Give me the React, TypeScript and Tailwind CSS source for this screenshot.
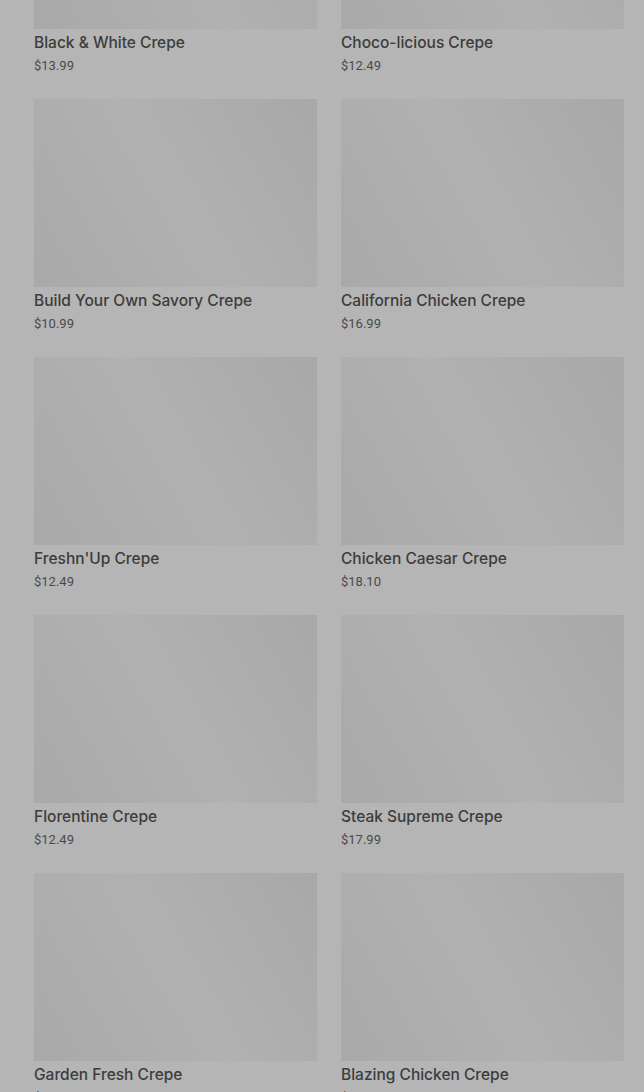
import React from 'react';

interface Crepe {
  name: string;
  price: string;
}

const CREPES: Crepe[] = [
  { name: 'Black & White Crepe', price: '$13.99' },
  { name: 'Choco-licious Crepe', price: '$12.49' },
  { name: 'Build Your Own Savory Crepe', price: '$10.99' },
  { name: 'California Chicken Crepe', price: '$16.99' },
  { name: "Freshn'Up Crepe", price: '$12.49' },
  { name: 'Chicken Caesar Crepe', price: '$18.10' },
  { name: 'Florentine Crepe', price: '$12.49' },
  { name: 'Steak Supreme Crepe', price: '$17.99' },
  { name: 'Garden Fresh Crepe', price: '$12.49' },
  { name: 'Blazing Chicken Crepe', price: '$13.99' },
];

const CrepeCard: React.FC<{ crepe: Crepe }> = ({ crepe }) => (
  <div className="flex flex-col">
    <div className="h-[188px] w-full bg-[linear-gradient(60deg,#a9a9a9_0%,#b1b1b1_50%,#a8a8a8_100%)]" />
    <div className="mt-1 text-[15.5px] leading-[20px] font-medium text-[#3c3c3c] truncate font-['Inter',sans-serif]">
      {crepe.name}
    </div>
    <div className="mt-1 text-[13px] leading-[18px] text-[#4a4a4a] font-['Roboto',sans-serif]">
      {crepe.price}
    </div>
  </div>
);

export default function App() {
  return (
    <div className="h-[1092px] w-full overflow-hidden bg-[#b5b5b5] font-['Roboto',sans-serif]">
      <div className="-mt-[159px] grid grid-cols-2 gap-x-6 gap-y-6 pl-[34px] pr-5">
        {CREPES.map((crepe) => (
          <CrepeCard key={crepe.name} crepe={crepe} />
        ))}
      </div>
    </div>
  );
}
